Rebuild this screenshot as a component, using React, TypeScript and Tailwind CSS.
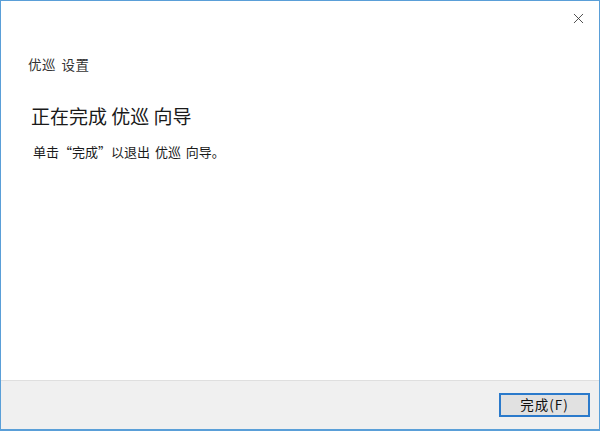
import { X } from "lucide-react"

export default function App() {
  return (
    <div
      className="flex h-[431px] w-[600px] flex-col border border-b-2 border-[#5a9fd8] bg-white text-[#1a1a1a]"
      style={{ fontFamily: '"Noto Sans CJK SC", "Noto Sans", sans-serif' }}
    >
      <div className="flex h-[37px] justify-end">
        <button className="flex h-[34px] w-[42px] items-center justify-center text-[#333]">
          <X className="h-[17px] w-[17px]" strokeWidth={1.2} />
        </button>
      </div>
      <div className="flex-1 pl-[27px]">
        <p className="mt-[16px] text-[13.5px] leading-[20px] tracking-[0.5px] [word-spacing:2px] text-[#333]">优巡 设置</p>
        <h1 className="mt-[29px] pl-[3px] text-[19px] leading-[26px]">正在完成 优巡 向导</h1>
        <p className="mt-[13px] pl-[5px] text-[13px] leading-[20px] [word-spacing:2px]">单击“完成”以退出 优巡 向导。</p>
      </div>
      <div className="flex h-[49px] items-center justify-end border-t border-[#dfdfdf] bg-[#f0f0f0] pr-[9px]">
        <button className="flex h-[24px] w-[91px] items-center justify-center border-2 border-[#2b7acb] bg-[#e1e1e1] text-[13.5px] leading-none tracking-[1px] text-[#111]">
          完成(F)
        </button>
      </div>
    </div>
  )
}
